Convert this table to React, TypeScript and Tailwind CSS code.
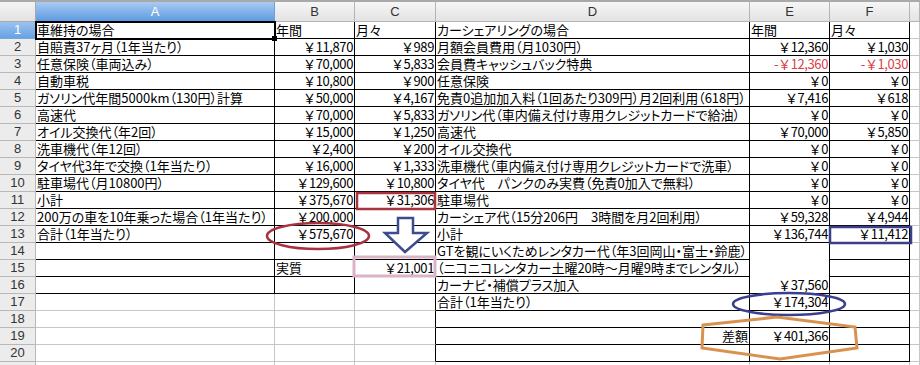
import React from "react"

type Cell = { t?: string; right?: boolean; red?: boolean; num?: boolean }

const COLS = ["A", "B", "C", "D", "E", "F", "G"]
const WIDTHS = ["w-[239px]", "w-[80px]", "w-[81px]", "w-[314px]", "w-[80px]", "w-[80px]", "w-[10px]"]

const y = (s: string): Cell => ({ t: s, right: true, num: true })
const r = (s: string): Cell => ({ t: s, right: true, red: true, num: true })

// left sheet A-C
const left: Cell[][] = [
  [{ t: "車維持の場合" }, { t: "年間" }, { t: "月々" }],
  [{ t: "自賠責37ヶ月（1年当たり）" }, y("￥11,870"), y("￥989")],
  [{ t: "任意保険（車両込み）" }, y("￥70,000"), y("￥5,833")],
  [{ t: "自動車税" }, y("￥10,800"), y("￥900")],
  [{ t: "ガソリン代年間5000km（130円）計算" }, y("￥50,000"), y("￥4,167")],
  [{ t: "高速代" }, y("￥70,000"), y("￥5,833")],
  [{ t: "オイル交換代（年2回）" }, y("￥15,000"), y("￥1,250")],
  [{ t: "洗車機代（年12回）" }, y("￥2,400"), y("￥200")],
  [{ t: "タイヤ代3年で交換（1年当たり）" }, y("￥16,000"), y("￥1,333")],
  [{ t: "駐車場代（月10800円）" }, y("￥129,600"), y("￥10,800")],
  [{ t: "小計" }, y("￥375,670"), y("￥31,306")],
  [{ t: "200万の車を10年乗った場合（1年当たり）" }, y("￥200,000"), {}],
  [{ t: "合計（1年当たり）" }, y("￥575,670"), {}],
  [{}, {}, {}],
  [{}, { t: "実質" }, y("￥21,001")],
  [{}, {}, {}],
]

// right sheet D-F
const right: Cell[][] = [
  [{ t: "カーシェアリングの場合" }, { t: "年間" }, { t: "月々" }],
  [{ t: "月額会員費用（月1030円）" }, y("￥12,360"), y("￥1,030")],
  [{ t: "会員費キャッシュバック特典" }, r("-￥12,360"), r("-￥1,030")],
  [{ t: "任意保険" }, y("￥0"), y("￥0")],
  [{ t: "免責0追加加入料（1回あたり309円）月2回利用（618円）" }, y("￥7,416"), y("￥618")],
  [{ t: "ガソリン代（車内備え付け専用クレジットカードで給油）" }, y("￥0"), y("￥0")],
  [{ t: "高速代" }, y("￥70,000"), y("￥5,850")],
  [{ t: "オイル交換代" }, y("￥0"), y("￥0")],
  [{ t: "洗車機代（車内備え付け専用クレジットカードで洗車）" }, y("￥0"), y("￥0")],
  [{ t: "タイヤ代　パンクのみ実費（免責0加入で無料）" }, y("￥0"), y("￥0")],
  [{ t: "駐車場代" }, y("￥0"), y("￥0")],
  [{ t: "カーシェア代（15分206円　3時間を月2回利用）" }, y("￥59,328"), y("￥4,944")],
  [{ t: "小計" }, y("￥136,744"), y("￥11,412")],
  [{ t: "GTを観にいくためレンタカー代（年3回岡山・富士・鈴鹿）" }, {}, {}],
  [{ t: "（ニコニコレンタカー土曜20時～月曜9時までレンタル）" }, {}, {}],
  [{ t: "カーナビ・補償プラス加入" }, y("￥37,560"), {}],
  [{ t: "合計（1年当たり）" }, y("￥174,304"), {}],
  [{}, {}, {}],
  [{ t: "差額", right: true }, y("￥401,366"), {}],
  [{}, {}, {}],
]

// is the cell (row 1-based, col 0=A) part of a bordered table
const inTable = (row: number, col: number) => {
  if (row < 1) return false
  if (col <= 2) return row <= 16
  if (col <= 5) return row <= 20
  return false
}

const getCell = (row: number, col: number): Cell => {
  if (col <= 2) return left[row - 1]?.[col] ?? {}
  if (col <= 5) return right[row - 1]?.[col - 3] ?? {}
  return {}
}

function Header() {
  return (
    <div className="flex h-[22px] border-t-2 border-[#a9a9a9]">
      <div className="w-[36px] h-full bg-gradient-to-b from-[#f4f4f4] to-[#e2e2e2] border-r border-b border-[#a8a8a8]" />
      {COLS.map((c, i) => (
        <div
          key={c}
          className={
            WIDTHS[i] +
            " h-full flex items-center justify-center border-r border-b text-[13px] font-['Liberation_Sans',sans-serif] " +
            (i === 0
              ? "bg-gradient-to-b from-[#a8cbf2] to-[#5d9be2] text-white border-[#6f9fd6]"
              : "bg-gradient-to-b from-[#f6f6f6] to-[#e3e3e3] text-[#333] border-[#b4b4b4]")
          }
        >
          {i < 6 ? c : ""}
        </div>
      ))}
    </div>
  )
}

function Row({ row }: { row: number }) {
  return (
    <div className="flex h-[17px]">
      <div
        className={
          "w-[36px] h-full flex items-center justify-center border-r border-b text-[13px] font-['Liberation_Sans',sans-serif] " +
          (row === 1
            ? "bg-gradient-to-b from-[#9cc2ef] to-[#66a2e4] text-white border-[#7aa6d8]"
            : "bg-[#ececec] text-[#333] border-[#b8b8b8]")
        }
      >
        {row <= 20 ? row : ""}
      </div>
      {COLS.map((_, col) => {
        const cell = getCell(row, col)
        const me = inTable(row, col)
        const rightDark = me || inTable(row, col + 1)
        const bottomDark = me || inTable(row + 1, col)
        // E14:E16 merged
        const noBottom = col === 4 && (row === 14 || row === 15)
        const sel = row === 1 && col === 0
        return (
          <div
            key={col}
            className={
              WIDTHS[col] +
              " h-full relative flex items-end whitespace-nowrap border-r " +
              (noBottom ? "" : "border-b ") +
              (rightDark ? "border-r-black " : "border-r-[#c6c6c6] ") +
              (bottomDark ? "border-b-black " : "border-b-[#c6c6c6] ") +
              (cell.right ? "justify-end pr-[1px] " : "pl-[1px] ") +
              (cell.red ? "text-[#d8404a] " : "text-black ") +
              (sel ? "outline-2 outline-black -outline-offset-1 " : "")
            }
          >
            <span
              className={
                "leading-[16px] " +
                (cell.num ? "[font-feature-settings:normal] tracking-[-0.4px]" : "[font-feature-settings:'palt']")
              }
            >
              {cell.t ?? ""}
            </span>
            {sel && <div className="absolute right-[-3px] bottom-[-3px] w-[5px] h-[5px] bg-black" />}
          </div>
        )
      })}
    </div>
  )
}

function Marks() {
  return (
    <svg className="absolute left-0 top-0 pointer-events-none" width={920} height={365}>
      <rect x={357} y={193} width={78} height={16} fill="none" stroke="#a8323e" strokeWidth={2.5} />
      <ellipse cx={318} cy={236} rx={51} ry={13} fill="none" stroke="#a8323e" strokeWidth={2.5} />
      <path
        d="M398,218 L413,218 L413,233 L427,233 L405,252 L385,233 L398,233 Z"
        fill="white"
        stroke="#3d4b8f"
        strokeWidth={2.5}
      />
      <rect x={354} y={257} width={81} height={19} fill="none" stroke="#dab4c6" strokeWidth={3} />
      <rect x={830} y={227} width={81} height={16} fill="none" stroke="#3b3f86" strokeWidth={2.5} />
      <ellipse cx={789} cy={304} rx={56} ry={11} fill="none" stroke="#3b3f8f" strokeWidth={2.5} />
      <polygon
        points="703,325 777,317 855,327 857,348 780,359 702,348"
        fill="none"
        stroke="#d8924f"
        strokeWidth={3}
      />
    </svg>
  )
}

export default function App() {
  const rows = Array.from({ length: 21 }, (_, i) => i + 1)
  return (
    <div className="relative w-[920px] h-[365px] overflow-hidden bg-white text-[13px] font-['Noto_Sans_CJK_JP',sans-serif]">
      <Header />
      {rows.map((row) => (
        <Row key={row} row={row} />
      ))}
      <Marks />
    </div>
  )
}
